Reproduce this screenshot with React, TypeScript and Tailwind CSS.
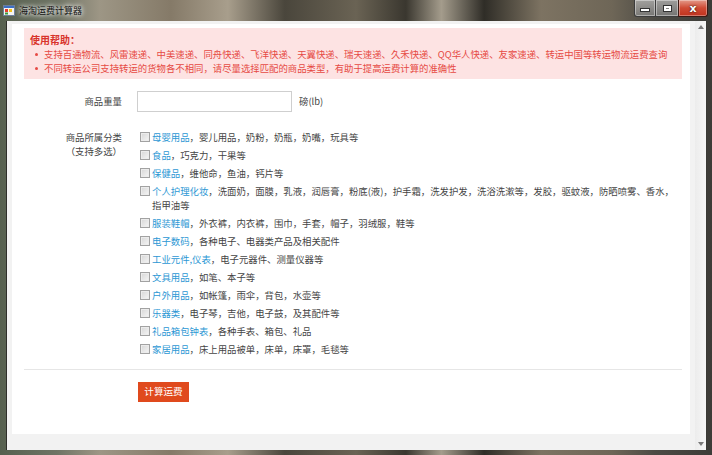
import React from "react";

const items: Array<{ name: string; desc: string }> = [
  { name: "母婴用品", desc: "，婴儿用品，奶粉，奶瓶，奶嘴，玩具等" },
  { name: "食品", desc: "，巧克力，干果等" },
  { name: "保健品", desc: "，维他命，鱼油，钙片等" },
  {
    name: "个人护理化妆",
    desc: "，洗面奶，面膜，乳液，润唇膏，粉底(液)，护手霜，洗发护发，洗浴洗漱等，发胶，驱蚊液，防晒喷雾、香水，指甲油等",
  },
  { name: "服装鞋帽", desc: "，外衣裤，内衣裤，围巾，手套，帽子，羽绒服，鞋等" },
  { name: "电子数码", desc: "，各种电子、电器类产品及相关配件" },
  { name: "工业元件,仪表", desc: "，电子元器件、测量仪器等" },
  { name: "文具用品", desc: "，如笔、本子等" },
  { name: "户外用品", desc: "，如帐篷，雨伞，背包，水壶等" },
  { name: "乐器类", desc: "，电子琴，吉他，电子鼓，及其配件等" },
  { name: "礼品箱包钟表", desc: "，各种手表、箱包、礼品" },
  { name: "家居用品", desc: "，床上用品被单，床单，床罩，毛毯等" },
];

const AppIcon = () => (
  <svg width="12" height="11" viewBox="0 0 12 11">
    <rect x="0.5" y="0.5" width="11" height="10" fill="#f4f4f4" stroke="#6d7f99" />
    <rect x="1" y="1" width="10" height="2" fill="#3d6fc4" />
    <rect x="2" y="4" width="3" height="3" fill="#e23b2e" />
    <rect x="6" y="4" width="3" height="3" fill="#f2c21b" />
    <rect x="2" y="7.5" width="3" height="2" fill="#3a9a3a" />
  </svg>
);

const CheckBox = () => (
  <div className="mt-[2px] w-[10px] h-[10px] shrink-0 border border-[#a2a2a2] bg-[linear-gradient(135deg,#d6d6d6,#f6f6f6)] shadow-[inset_0_0_0_1px_#ececec]" />
);

export default function App() {
  return (
    <div className="w-[712px] h-[455px] flex flex-col overflow-hidden font-['Noto_Sans_CJK_SC',sans-serif] bg-[linear-gradient(90deg,#56604f_0%,#6f7465_8%,#9d9685_14%,#857a68_24%,#a89e8c_32%,#4a463c_40%,#6a6354_50%,#3a372f_57%,#a49c8c_62%,#2f2d27_68%,#7d7362_76%,#6e6657_86%,#4c4a44_92%,#3d3c38_100%)]">
      {/* title bar */}
      <div className="h-[21px] flex items-start shrink-0">
        <div className="flex items-center h-[20px] pl-[3px] gap-[4px]">
          <AppIcon />
          <span className="text-[9px] leading-none text-[#111] [text-shadow:0_0_4px_#fff,0_0_6px_#fff]">
            海淘运费计算器
          </span>
        </div>
        <div className="ml-auto mr-[4px] flex">
          <div className="w-[22px] h-[17px] border border-[#3c3c3c] border-t-0 rounded-bl-[3px] bg-[linear-gradient(#c9c9c9aa,#8a8a8aaa)] shadow-[inset_0_0_0_1px_#ffffff66] flex items-end justify-center pb-[4px]">
            <span className="w-[8px] h-[2px] bg-white border border-[#333] box-content" />
          </div>
          <div className="w-[22px] h-[17px] border-b border-[#3c3c3c] bg-[linear-gradient(#c9c9c9aa,#8a8a8aaa)] shadow-[inset_0_0_0_1px_#ffffff66] flex items-center justify-center">
            <span className="w-[7px] h-[5px] border-2 border-white outline outline-1 outline-[#333]" />
          </div>
          <div className="w-[30px] h-[17px] border border-[#3c1a14] border-t-0 rounded-br-[3px] bg-[linear-gradient(#e49a8a,#cf4a34_50%,#c0321e)] shadow-[inset_0_0_0_1px_#ffffff55] flex items-center justify-center">
            <span className="text-white text-[11px] font-bold leading-none font-['DejaVu_Sans',sans-serif] [text-shadow:0_0_2px_#000]">
              x
            </span>
          </div>
        </div>
      </div>

      {/* client */}
      <div className="flex-1 flex pl-[6px] pr-[7px] pb-[5px]">
        <div className="flex-1 flex bg-[#f2f2f2] border-l border-[#2e2e2a]">
          <div className="flex-1 pl-[5px] pr-[5px] pt-[3px] pb-[16px]">
            <div className="h-full bg-white pt-[4px] pl-[12px] pr-[8px]">
              {/* help box */}
              <div className="bg-[#fde3e3] h-[51px] pl-[6px] pt-[5px] text-[9.4px] text-[#e64a44]">
                <div className="font-bold text-[#d8332b] leading-[13px] text-[10px]">使用帮助：</div>
                <div className="flex items-center leading-[14px] mt-[1px]">
                  <span className="w-[3px] h-[3px] rounded-full bg-[#e64a44] ml-[5px] mr-[6px]" />
                  支持百通物流、风雷速递、中美速递、同舟快递、飞洋快递、天翼快递、瑞天速递、久禾快递、QQ华人快递、友家速递、转运中国等转运物流运费查询
                </div>
                <div className="flex items-center leading-[14px]">
                  <span className="w-[3px] h-[3px] rounded-full bg-[#e64a44] ml-[5px] mr-[6px]" />
                  不同转运公司支持转运的货物各不相同，请尽量选择匹配的商品类型，有助于提高运费计算的准确性
                </div>
              </div>

              {/* weight */}
              <div className="flex items-center mt-[12px] text-[9.4px] text-[#444]">
                <div className="w-[98px] text-right">商品重量</div>
                <div className="ml-[15px] w-[155px] h-[21px] border border-[#cfcfcf] bg-white" />
                <div className="ml-[7px]">磅(lb)</div>
              </div>

              {/* categories */}
              <div className="flex mt-[18px] text-[9.4px] text-[#444]">
                <div className="w-[98px] text-right leading-[14px]">
                  <div>商品所属分类</div>
                  <div>（支持多选）</div>
                </div>
                <div className="ml-[18px] flex flex-col gap-[4px]">
                  {items.map((it) => (
                    <div key={it.name} className="flex items-start leading-[14px]">
                      <CheckBox />
                      <div className="ml-[2px] w-[530px]">
                        <span className="text-[#2c97d4]">{it.name}</span>
                        {it.desc}
                      </div>
                    </div>
                  ))}
                </div>
              </div>

              {/* divider */}
              <div className="mt-[13px] h-px bg-[#e6e6e6]" />

              <div className="mt-[12px] ml-[114px] flex">
                <button className="w-[51px] h-[20px] bg-[#e04a1d] text-white text-[9.6px] leading-none">
                  计算运费
                </button>
              </div>
            </div>
          </div>

          {/* scrollbar */}
          <div className="w-[12px] bg-[linear-gradient(90deg,#ececec,#f6f6f6)] border-r border-[#3a3a36] flex flex-col items-center justify-between py-[4px]">
            <svg width="6" height="4" viewBox="0 0 6 4">
              <path d="M0 4 L3 0 L6 4 Z" fill="#7a7a7a" />
            </svg>
            <svg width="6" height="4" viewBox="0 0 6 4">
              <path d="M0 0 L3 4 L6 0 Z" fill="#7a7a7a" />
            </svg>
          </div>
        </div>
      </div>
    </div>
  );
}
